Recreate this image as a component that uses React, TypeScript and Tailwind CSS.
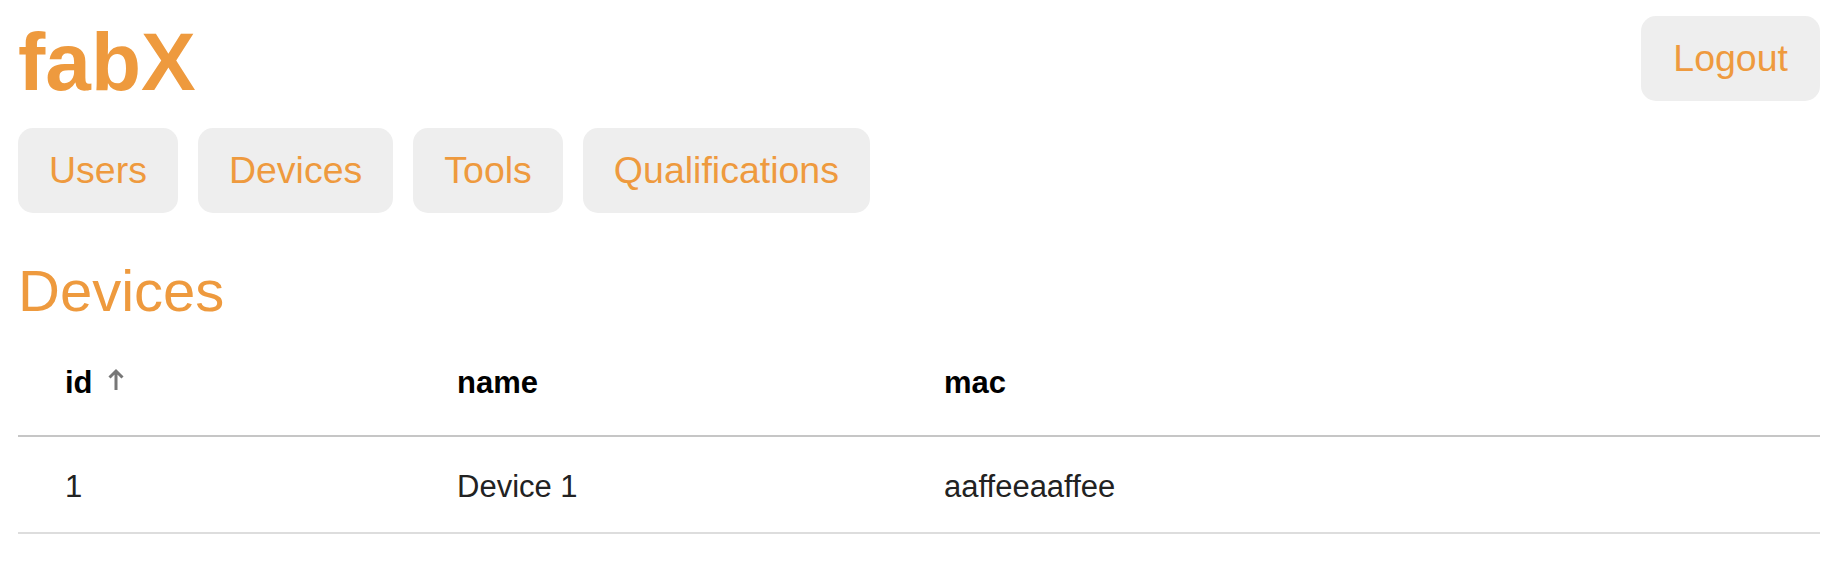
import React from "react";

const navItems = ["Users", "Devices", "Tools", "Qualifications"];

const devices = [{ id: 1, name: "Device 1", mac: "aaffeeaaffee" }];

function SortArrow() {
  return (
    <svg width="18" height="23" viewBox="0 0 18 23" className="ml-[14px] mb-[10px]">
      <path d="M9 22V3M2.5 9.5L9 3l6.5 6.5" fill="none" stroke="#777777" strokeWidth="3" />
    </svg>
  );
}

function App() {
  return (
    <div className="min-h-screen bg-white px-[18px] pt-4 font-['Liberation_Sans',Arial,sans-serif]">
      <header className="flex items-start justify-between">
        <h1 className="text-[82px] font-bold leading-[92px] text-[#ee9a3e]">fabX</h1>
        <button className="rounded-[15px] bg-[#eeeeee] px-[32px] py-[21px] text-[37.5px] leading-[43px] text-[#ee9a3e]">
          Logout
        </button>
      </header>

      <nav className="mt-5 flex gap-5">
        {navItems.map((item) => (
          <button
            key={item}
            className="rounded-[15px] bg-[#eeeeee] px-[31px] py-[21px] text-[37.5px] leading-[43px] text-[#ee9a3e]"
          >
            {item}
          </button>
        ))}
      </nav>

      <h2 className="mt-[45px] text-[58px] leading-[65px] text-[#ee9a3e]">Devices</h2>

      <div className="text-[31px] leading-[36px]">
        <div className="grid grid-cols-[392px_487px_1fr] border-b-2 border-[#c6c6c6] pl-[47px] pt-[42px] pb-[34px] font-bold text-black">
          <div className="flex items-end">
            id
            <SortArrow />
          </div>
          <div>name</div>
          <div>mac</div>
        </div>
        {devices.map((d) => (
          <div
            key={d.id}
            className="grid grid-cols-[392px_487px_1fr] border-b-2 border-[#dddddd] pl-[47px] pt-[32px] pb-[27px] text-[#222222]"
          >
            <div>{d.id}</div>
            <div>{d.name}</div>
            <div>{d.mac}</div>
          </div>
        ))}
      </div>
    </div>
  );
}

export default App;
